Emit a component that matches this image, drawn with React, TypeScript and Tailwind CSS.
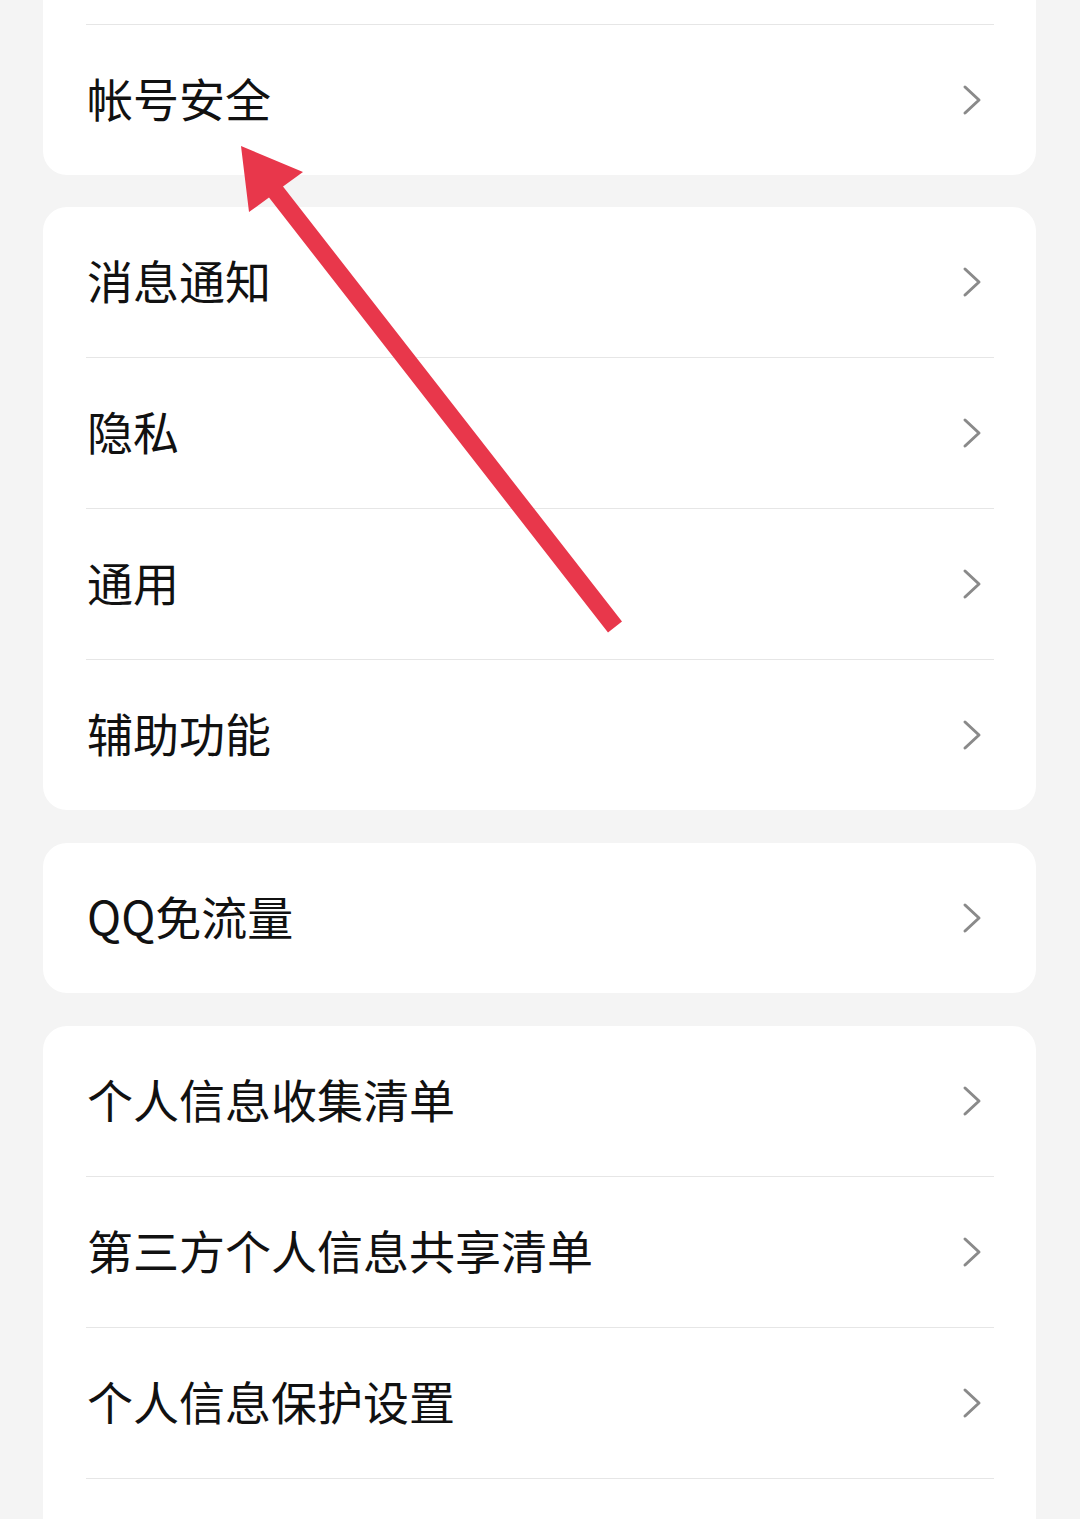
import React from 'react';

const groups: { items: string[]; cutTop?: boolean; cutBottom?: boolean }[] = [
  { items: ['帐号安全'], cutTop: true },
  { items: ['消息通知', '隐私', '通用', '辅助功能'] },
  { items: ['QQ免流量'] },
  { items: ['个人信息收集清单', '第三方个人信息共享清单', '个人信息保护设置'], cutBottom: true },
];

function Chevron() {
  return (
    <svg width="20" height="32" viewBox="0 0 20 32" className="shrink-0">
      <path d="M3 3 L17 16 L3 29" fill="none" stroke="#8a8a8a" strokeWidth="3" strokeLinecap="round" strokeLinejoin="round" />
    </svg>
  );
}

function Divider() {
  return <div className="ml-[43px] mr-[42px] h-px bg-[#e6e6e6]" />;
}

function Row({ label }: { label: string }) {
  return (
    <div className="flex h-[150px] items-center justify-between pl-[44px] pr-[54px]">
      <span className="pb-[6px] text-[46px] leading-none text-[#111111]">{label}</span>
      <Chevron />
    </div>
  );
}

export default function App() {
  return (
    <div
      className="relative h-[1519px] w-[1080px] overflow-hidden bg-[#f4f4f4]"
      style={{ fontFamily: '"Noto Sans CJK SC", "Noto Sans", sans-serif' }}
    >
      <div className="flex flex-col gap-[33px] px-[43px] pr-[44px]">
        {groups.map((g, gi) => (
          <div
            key={gi}
            className={`bg-white ${g.cutTop ? '-mb-px rounded-b-[24px]' : g.cutBottom ? 'rounded-t-[24px]' : 'rounded-[24px]'}`}
          >
            {g.cutTop && (
              <>
                <div className="h-[24px]" />
                <Divider />
              </>
            )}
            {g.items.map((label, i) => (
              <React.Fragment key={label}>
                {i > 0 && <Divider />}
                <Row label={label} />
              </React.Fragment>
            ))}
            {g.cutBottom && (
              <>
                <Divider />
                <div className="h-[60px]" />
              </>
            )}
          </div>
        ))}
      </div>

      {/* red annotation arrow */}
      <svg className="pointer-events-none absolute left-0 top-0" width="1080" height="1519">
        <polygon
          points="241,146 303,172 283,186.5 622,621.5 608,632.5 269,197.5 249,212"
          fill="#e8374b"
        />
      </svg>
    </div>
  );
}
